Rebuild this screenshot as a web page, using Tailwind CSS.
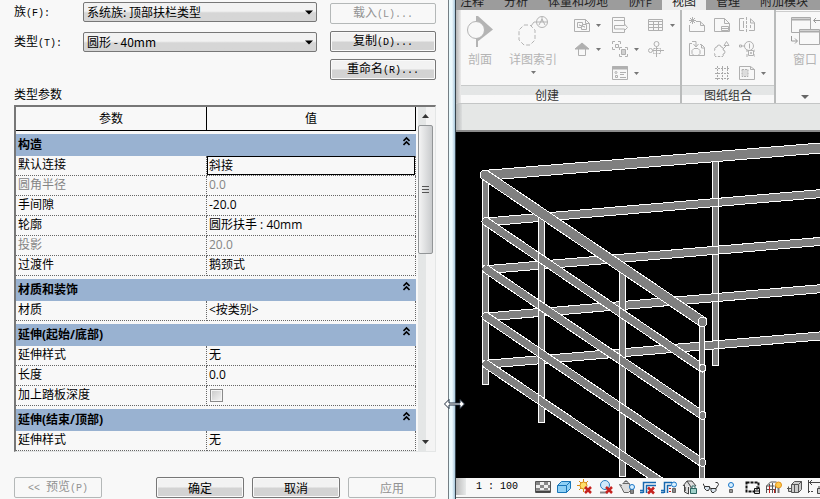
<!DOCTYPE html>
<html lang="zh-CN">
<head>
    <meta charset="UTF-8">
    <meta name="viewport" content="width=device-width, initial-scale=1.0">
    <title>类型属性</title>
    <script src="https://cdn.jsdelivr.net/npm/@tailwindcss/browser@4"></script>
</head>
<body class="bg-[#f8f8f8] text-black text-xs font-['Open_Sans','Noto_Sans_CJK_SC',sans-serif]">

    <div class="grid grid-cols-[minmax(0,448fr)_8px_minmax(0,364fr)] min-h-screen overflow-hidden">

        <!-- Type properties dialog -->
        <form class="pl-[14px] pr-3 flex flex-col font-['Noto_Sans_CJK_SC',sans-serif]">
            <div class="flex gap-[13px]">
                <div class="flex-1 grid grid-cols-[69px_minmax(0,1fr)] gap-y-[10px] content-start pt-[2px]">
                    <label for="family" class="h-5 leading-[18px]">族<span class="font-['Liberation_Mono',monospace] text-[10px]">(F):</span></label>
                    <div class="relative h-5">
                        <select id="family" class="appearance-none block w-full h-5 pl-[3px] leading-[18px] border border-[#777] rounded-[2px] bg-linear-to-b from-[#f2f2f2] from-45% to-[#d6d6d6] to-55%">
                            <option>系统族: 顶部扶栏类型</option>
                        </select>
                        <svg class="absolute right-[4px] top-[8px] pointer-events-none" width="8" height="5"><path d="M0 .5h8L4 4.500z"/></svg>
                    </div>
                    <label for="type" class="h-5 leading-[18px]">类型<span class="font-['Liberation_Mono',monospace] text-[10px]">(T):</span></label>
                    <div class="relative h-5">
                        <select id="type" class="appearance-none block w-full h-5 pl-[3px] leading-[18px] border border-[#777] rounded-[2px] bg-linear-to-b from-[#f2f2f2] from-45% to-[#d6d6d6] to-55%">
                            <option>圆形 - 40mm</option>
                        </select>
                        <svg class="absolute right-[4px] top-[8px] pointer-events-none" width="8" height="5"><path d="M0 .5h8L4 4.500z"/></svg>
                    </div>
                </div>
                <div class="w-[106px] flex flex-col gap-[7px] pt-[3px] pb-[2px]">
                    <button type="button" disabled class="h-[21px] leading-4 border border-[#b4b8b8] rounded-[2px] text-[#929292]">载入<span class="font-['Liberation_Mono',monospace] text-[10px]">(L)...</span></button>
                    <button type="button" class="h-[21px] leading-4 border border-[#777] rounded-[2px] shadow-[inset_0_0_0_1px_#fafafa] bg-linear-to-b from-[#f2f2f2] from-45% to-[#d3d3d3] to-55%">复制<span class="font-['Liberation_Mono',monospace] text-[10px]">(D)...</span></button>
                    <button type="button" class="h-[21px] leading-4 border border-[#777] rounded-[2px] shadow-[inset_0_0_0_1px_#fafafa] bg-linear-to-b from-[#f2f2f2] from-45% to-[#d3d3d3] to-55%">重命名<span class="font-['Liberation_Mono',monospace] text-[10px]">(R)...</span></button>
                </div>
            </div>

            <p class="leading-[23px]">类型参数</p>

            <div class="flex border-t-2 border-l-2 border-t-[#777] border-l-[#777] border-r border-b border-r-[#e4e6e6] border-b-[#e4e6e6] font-['Open_Sans','Noto_Sans_CJK_SC',sans-serif]">
                <table class="flex-1 table-fixed border-separate border-spacing-0 leading-[18px]">
                    <colgroup><col class="w-[191px]"><col></colgroup>
                    <thead>
                        <tr class="h-6">
                            <th class="p-0 font-normal border-r border-b border-black">参数</th>
                            <th class="p-0 font-normal border-r border-b border-black">值</th>
                        </tr>
                    </thead>
                    <tbody class="[&_td]:h-5 [&_td]:p-0 [&_td]:pl-[2px] [&_td]:pb-[2px] [&_td]:leading-[17px] [&_td]:border-r [&_td]:border-b [&_td]:border-dotted [&_td]:border-[#666]">
                        <tr class="h-[25px]">
                            <th colspan="2" class="p-0 pl-[2px] border-t-[3px] border-[#f8f8f8] bg-[#99b2d1] text-left">
                                <div class="flex justify-between pr-[6px]">构造<svg width="7" height="16" fill="none" stroke="#000" stroke-width="1.600"><path d="M.5 5l3-3 3 3M.5 9l3-3 3 3"/></svg></div>
                            </th>
                        </tr>
                        <tr><td>默认连接</td><td class="!p-0"><input type="text" value="斜接" aria-label="默认连接" class="block w-full h-[19px] pl-[1px] pb-[2px] border border-black leading-4"></td></tr>
                        <tr class="text-[#858585]"><td>圆角半径</td><td>0.0</td></tr>
                        <tr><td>手间隙</td><td>-20.0</td></tr>
                        <tr><td>轮廓</td><td>圆形扶手 : 40mm</td></tr>
                        <tr class="text-[#858585]"><td>投影</td><td>20.0</td></tr>
                        <tr><td>过渡件</td><td>鹅颈式</td></tr>
                        <tr class="h-[25px]">
                            <th colspan="2" class="p-0 pl-[2px] border-t-[3px] border-[#f8f8f8] bg-[#99b2d1] text-left">
                                <div class="flex justify-between pr-[6px]">材质和装饰<svg width="7" height="16" fill="none" stroke="#000" stroke-width="1.600"><path d="M.5 5l3-3 3 3M.5 9l3-3 3 3"/></svg></div>
                            </th>
                        </tr>
                        <tr><td>材质</td><td>&lt;按类别&gt;</td></tr>
                        <tr class="h-[25px]">
                            <th colspan="2" class="p-0 pl-[2px] border-t-[3px] border-[#f8f8f8] bg-[#99b2d1] text-left">
                                <div class="flex justify-between pr-[6px]">延伸(起始/底部)<svg width="7" height="16" fill="none" stroke="#000" stroke-width="1.600"><path d="M.5 5l3-3 3 3M.5 9l3-3 3 3"/></svg></div>
                            </th>
                        </tr>
                        <tr><td>延伸样式</td><td>无</td></tr>
                        <tr><td>长度</td><td>0.0</td></tr>
                        <tr><td><label for="depth">加上踏板深度</label></td><td class="!pb-0"><input type="checkbox" id="depth" class="appearance-none block size-[13px] ml-[1px] border border-[#8a8a8a] bg-linear-to-br from-[#c8c8c8] to-[#f6f6f6] shadow-[inset_0_0_0_1px_#f4f4f4]"></td></tr>
                        <tr class="h-[25px]">
                            <th colspan="2" class="p-0 pl-[2px] border-t-[3px] border-[#f8f8f8] bg-[#99b2d1] text-left">
                                <div class="flex justify-between pr-[6px]">延伸(结束/顶部)<svg width="7" height="16" fill="none" stroke="#000" stroke-width="1.600"><path d="M.5 5l3-3 3 3M.5 9l3-3 3 3"/></svg></div>
                            </th>
                        </tr>
                        <tr><td>延伸样式</td><td>无</td></tr>
                    </tbody>
                </table>
                <!-- Scroll bar -->
                <div class="w-[17px] ml-[2px] flex flex-col items-start bg-linear-to-r from-[#e4e6e6] from-50% to-[#f4f4f4] to-50%">
                    <div class="w-[15px] h-[18px] flex items-center justify-center"><svg width="7" height="4"><path d="M0 4l3.500-4L7 4z" fill="#333"/></svg></div>
                    <div class="w-[15px] h-[129px] border border-[#929597] rounded-[2px] bg-linear-to-r from-[#f4f4f4] to-[#c9cbcd] flex flex-col items-center justify-center gap-[2px]">
                        <i class="w-[7px] h-px bg-[#555]"></i>
                        <i class="w-[7px] h-px bg-[#555]"></i>
                        <i class="w-[7px] h-px bg-[#555]"></i>
                    </div>
                    <div class="w-[15px] h-[18px] mt-auto flex items-center justify-center"><svg width="7" height="4"><path d="M0 0h7L3.500 4z" fill="#333"/></svg></div>
                </div>
            </div>

            <div class="flex gap-2 mt-[25px]">
                <button type="button" disabled class="w-[88px] h-[21px] mr-auto leading-4 border border-[#b4b8b8] rounded-[2px] text-[#929292]"><span class="font-['Liberation_Mono',monospace] text-[10px]">&lt;&lt; </span>预览<span class="font-['Liberation_Mono',monospace] text-[10px]">(P)</span></button>
                <button type="submit" class="w-[88px] h-[21px] leading-4 border border-[#777] rounded-[2px] shadow-[inset_0_0_0_1px_#fafafa] bg-linear-to-b from-[#f2f2f2] from-45% to-[#d3d3d3] to-55%">确定</button>
                <button type="button" class="w-[88px] h-[21px] leading-4 border border-[#777] rounded-[2px] shadow-[inset_0_0_0_1px_#fafafa] bg-linear-to-b from-[#f2f2f2] from-45% to-[#d3d3d3] to-55%">取消</button>
                <button type="button" disabled class="w-[88px] h-[21px] leading-4 border border-[#b4b8b8] rounded-[2px] text-[#929292]">应用</button>
            </div>
        </form>

        <!-- Window edge with the resize cursor over it -->
        <div class="relative z-10 border-l border-r border-l-[#747e84] border-r-[#35434d] bg-linear-to-r from-[#e6fafe] via-[#eef9fd] to-[#a9c8dc]">
            <svg class="absolute -left-[6px] top-[398px]" width="24" height="12" fill="#fff" stroke="#1d2a3c"><path d="M1.500 6L6 1.500V5h11V1.500L21.500 6 17 10.500V7H6v3.500z"/></svg>
        </div>

        <!-- Main window -->
        <div class="flex flex-col min-w-0">
            <nav class="flex h-[10px] overflow-hidden bg-[#9c9c9c] pl-1 text-[#222] whitespace-nowrap items-end leading-4">
                <a href="#" class="pr-[10px]">注释</a>
                <a href="#" class="px-[10px]">分析</a>
                <a href="#" class="px-[10px]">体量和场地</a>
                <a href="#" class="px-[10px]">协作</a>
                <a href="#" class="px-[10px] bg-[#ececec]">视图</a>
                <a href="#" class="px-[10px]">管理</a>
                <a href="#" class="px-[10px]">附加模块</a>
            </nav>

            <div class="flex h-[94px] overflow-hidden border-b border-[#c4c6c6] bg-[#f8f8f8] text-[#b4b4b4] leading-4">
                <div class="w-[5px] shrink-0 bg-linear-to-r from-[#b8b8b8] to-[#ececec]"></div>

                <section class="w-[221px] shrink-0 flex flex-col border-r-2 border-[#b9bbbb]">
                    <div class="h-[76px] flex pl-[7px]">
                        <button class="w-6 mr-4 pt-[5px] flex flex-col items-center">
                            <svg class="shrink-0" width="26" height="33"><path d="M9 1h2l15 13.500-14 11-1 .5v6H9z" fill="#b4b4b4"/><circle cx="9" cy="15" r="8.500" fill="#f8f8f8" stroke="#b4b4b4"/></svg>
                            <span class="mt-[4px] whitespace-nowrap">剖面</span>
                        </button>
                        <button class="w-[50px] mr-[16px] pt-[5px] flex flex-col items-center">
                            <svg class="shrink-0" width="32" height="33" fill="none" stroke="#b4b4b4"><path d="M7 10h6l5 5v10l-5 5H7l-5-5V15z" stroke-dasharray="4 2"/><path d="M14 11l3-4h13"/><circle cx="25" cy="7" r="5.500"/><path d="M22 10l3-6 3 6M25 2v5"/></svg>
                            <span class="mt-[4px] whitespace-nowrap">详图索引</span>
                            <svg class="mt-[3px] shrink-0" width="5" height="3"><path d="M0 0h5L2.500 3z" fill="#777"/></svg>
                        </button>
                        <div class="grid grid-cols-[38px_36px_28px] grid-rows-[24px_24px_24px] pt-[3px] [&>button]:flex [&>button]:items-center [&>button]:gap-[6px]">
                            <button aria-label="平面视图"><svg width="16" height="16" fill="none" stroke="#b0b0b0"><path d="M.5 2.500h11l4 4v8H.5zM11.500 2.500v4h4M3.500 5.500h5v2h4v5h-5v-2h-4zM5.500 7.500v1h2v2M10.500 10.500v-1h-2v-2"/></svg><svg width="5" height="3"><path d="M0 0h5L2.500 3z" fill="#777"/></svg></button>
                            <button aria-label="绘图视图"><svg width="16" height="16" fill="none" stroke="#b0b0b0"><path d="M12.500 7V.5H.5v15h12V13M2 3.500h10M2.500 8.500h10V7l3 3.500-3 3V12h-10z"/></svg></button>
                            <button aria-label="明细表"><svg width="16" height="16" fill="none" stroke="#b0b0b0"><path d="M.5 2.500h14v11H.5zM0 4.500h15M.5 7.500h14M.5 10.500h14M5.500 5v8M10.500 5v8"/></svg><svg width="5" height="3"><path d="M0 0h5L2.500 3z" fill="#777"/></svg></button>
                            <button aria-label="立面"><svg width="16" height="16" fill="none" stroke="#b0b0b0"><path d="M4.500 8v6.500h7V8"/><path d="M8 2l7 6H1z" fill="#b0b0b0"/></svg><svg width="5" height="3"><path d="M0 0h5L2.500 3z" fill="#777"/></svg></button>
                            <button aria-label="复制视图"><svg width="16" height="16" fill="none" stroke="#b0b0b0"><path d="M.5 3V.5H3M6 .5h2.500V3M.5 6v2.500H3M3.500 3.500h3v3h-3zM7.500 9V6.500H10M13 6.500h2.500V9M7.500 13v2.500H10M15.500 13v2.500H13"/><path d="M9.500 8.500h4v5h-4z" fill="#d0d0d0"/></svg><svg width="5" height="3"><path d="M0 0h5L2.500 3z" fill="#777"/></svg></button>
                            <button aria-label="范围框"><svg width="16" height="16" fill="none" stroke="#b0b0b0"><circle cx="8.500" cy="3" r="2.500"/><circle cx="2.500" cy="9.500" r="2"/><path d="M8.500 5.500V16M4.500 9.500H16"/><path d="M5.500 7.500h7v5h-7z" stroke-dasharray="2 1"/></svg></button>
                            <button aria-label="图例" class="col-start-2"><svg width="16" height="16" fill="none" stroke="#b0b0b0"><path d="M.5 1.500h15v13H.5z"/><path d="M0 3h16" stroke-width="3"/><circle cx="4" cy="7.500" r="1"/><path d="M3.500 10.500h2v2h-2zM8 7.500h6M8 9.500h4M8 12.500h6"/></svg><svg width="5" height="3"><path d="M0 0h5L2.500 3z" fill="#777"/></svg></button>
                        </div>
                    </div>
                    <h2 class="flex-1 border-t border-[#c8caca] bg-linear-to-b from-[#e4e6e6] from-50% to-[#f8f8f8] to-50% text-[#333] text-center leading-[19px] pr-[47px]">创建</h2>
                </section>

                <section class="w-[94px] shrink-0 flex flex-col border-r-2 border-[#b9bbbb]">
                    <div class="h-[76px] grid grid-cols-[25px_25px_30px] grid-rows-[24px_24px_24px] pt-[3px] pl-[7px] [&>button]:flex [&>button]:items-center [&>button]:gap-[6px]">
                        <button aria-label="图纸"><svg width="16" height="16" fill="none" stroke="#b0b0b0"><path d="M7 4.500h4l4.500 4v6H.5V8M11.500 4.500v4h4M3.500 0v7M0 3.500h7M1 1l5 5M6 1L1 6"/></svg></button>
                        <button aria-label="标题栏"><svg width="16" height="16" fill="none" stroke="#b0b0b0"><path d="M.5 1.500h10l5 5v8H.5zM10.500 1.500v5h5"/><path d="M7.500 9.500h7v4h-7zM7.500 11.500h7"/></svg></button>
                        <button aria-label="拼接线"><svg width="16" height="16" fill="none" stroke="#b0b0b0"><path d="M5 1.500H.5v12H5M11 1.500l4.500 4v8H10M11.500 2v4h4M4.500 4v7M11.500 8v3"/><path d="M7.500 0v16" stroke-dasharray="3 1"/></svg></button>
                        <button aria-label="放置视图"><svg width="16" height="16" fill="none" stroke="#b0b0b0"><path d="M3 2.500H.5v12h15v-8l-3-3H11M12.500 4v3h3M3 .5h4V5M4.500 3L7 6l2.500-3"/><path d="M5 7.500h4l2 2v3l-2 2H5l-2-2v-3z"/></svg></button>
                        <button aria-label="修订"><svg width="16" height="16" fill="none" stroke="#b0b0b0"><path d="M12.500.5l2.500 4h-5zM3 6a2 2 0 0 1 4 0 2 2 0 0 1 2 3 2 2 0 0 1 0 4 2 2 0 0 1-4 2 2 2 0 0 1-4-2 2 2 0 0 1 0-4 2 2 0 0 1 2-3M9 8l3-3"/></svg></button>
                        <button aria-label="导向轴网"><svg width="16" height="16" fill="none" stroke="#b0b0b0"><circle cx="10" cy="5" r="4.500"/><path d="M.5 4h2v2h-2zM2.500 5h3M10.500 2.500v5M9.500 9.500h5v5h-5zM11.500 11.500h1v1h-1zM8 8.500V11M16 8.500V11M8 13v3M16 13v3"/></svg></button>
                        <button aria-label="轴网" class="col-start-2"><svg width="16" height="16" fill="none" stroke="#aaa" stroke-dasharray="2 1"><path d="M3.500 1v14M8.500 1v14M13.500 1v14M1 3.500h14M1 8.500h14M1 13.500h14"/></svg></button>
                        <button aria-label="视口"><svg class="shrink-0" width="16" height="16" fill="none" stroke="#b0b0b0"><path d="M.5 1.500h11l4 3v10H.5zM11.500 1.500v3h4"/><path d="M3 4.500h6v7H3z" fill="#ddd" stroke-dasharray="2 1"/></svg><svg class="shrink-0" width="5" height="3"><path d="M0 0h5L2.500 3z" fill="#777"/></svg></button>
                    </div>
                    <h2 class="flex-1 border-t border-[#c8caca] bg-linear-to-b from-[#e4e6e6] from-50% to-[#f8f8f8] to-50% text-[#333] text-center leading-[19px]">图纸组合</h2>
                </section>

                <section class="min-w-[60px] flex-1 mt-[1px] border-t border-[#ccc]">
                    <button class="w-full pl-[14px] pt-[5px] flex flex-col items-start">
                        <svg width="32" height="30" fill="#f8f8f8" stroke="#aaa"><path d="M1.500.5h19v15h-19z"/><path d="M1 2.500h20" stroke-width="2"/><path d="M9.500 12.500h20v15h-20z"/><path d="M9 14.500h21" stroke-width="2"/><path d="M1.500 19v5H7M5 21.500L7.500 24 5 26.500M32 3.500h-8M26 1l-2.500 2.500L26 6" fill="none" stroke="#999"/></svg>
                        <span class="ml-[3px] mt-[5px]">窗口</span>
                        <svg class="ml-[11px] mt-[27px]" width="8" height="4"><path d="M0 0h8L4 4z" fill="#666"/></svg>
                    </button>
                </section>
            </div>

            <div class="h-[28px] flex bg-[#e5e7e6] border-b-2 border-[#8b8b8b]">
                <div class="w-[6px] bg-linear-to-r from-[#b4b6b6] to-[#dcdede]"></div>
            </div>

            <!-- Railing model view -->
            <div class="flex-1 min-h-[346px] bg-black relative">
                <svg class="absolute inset-0 size-full" viewBox="456 132 364 346" preserveAspectRatio="xMinYMin slice" shape-rendering="crispEdges" fill="none">
                    <g stroke="#fff" stroke-width="7"><path d="M715.500 160V366"/></g>
                    <g stroke="#808080" stroke-width="5"><path d="M715.500 160V365"/></g>
                    <g stroke="#fff" stroke-width="9"><path d="M486 222L822 193.500M486 269.700L822 241.300M486 317L822 288.600M486 364.300L822 335.800"/><path d="M486 175.300L822 147.900" stroke-width="11"/></g>
                    <g stroke="#808080" stroke-width="7"><path d="M486 222L822 193.500M486 269.700L822 241.300M486 317L822 288.600M486 364.300L822 335.800"/><path d="M486 175.300L822 147.900" stroke-width="9"/></g>
                    <path d="M718.500 162V365" stroke="#fff"/>
                    <g stroke="#fff" stroke-width="7"><path d="M485.500 178V385M541.500 217V423M622.500 272V477"/></g>
                    <g stroke="#808080" stroke-width="5"><path d="M485.500 178V384M541.500 217V422M622.500 272V476"/></g>
                    <g stroke="#fff" stroke-width="9" stroke-linecap="round"><path d="M486 221.500L702 368M486 269L702 415M486 316.500L702 462.500M486 364L702 509.500"/></g>
                    <g stroke="#808080" stroke-width="7" stroke-linecap="round"><path d="M486 221.500L702 368M486 269L702 415M486 316.500L702 462.500M486 364L702 509.500"/></g>
                    <path d="M538.500 217V422M619.500 272V476" stroke="#fff"/>
                    <path d="M702 322V480" stroke="#fff" stroke-width="6"/>
                    <path d="M702 322V480" stroke="#808080" stroke-width="4"/>
                    <path d="M485 175L702 321.500" stroke="#fff" stroke-width="11" stroke-linecap="round"/>
                    <path d="M485 175L702 321.500" stroke="#808080" stroke-width="9" stroke-linecap="round"/>
                    <g stroke="#fff" fill="#808080"><circle cx="702.500" cy="322" r="4.500"/><ellipse cx="702.500" cy="368" rx="3" ry="4"/><ellipse cx="702.500" cy="415.500" rx="3" ry="4"/><ellipse cx="702.500" cy="462.500" rx="3" ry="4"/></g>
                </svg>
            </div>

            <!-- View control bar -->
            <div class="h-[21px] flex items-start bg-[#f8f8f8] overflow-hidden">
                <div class="w-full h-[20px] flex items-center border-b border-[#8b8b8b] overflow-hidden pb-[2px]">
                    <div class="w-[10px] h-full shrink-0 bg-linear-to-r from-[#bbb] to-[#e8eaea]"></div>
                    <span class="w-[69px] shrink-0 pl-[10px] font-['Liberation_Mono',monospace] text-[10px] whitespace-nowrap">1 : 100</span>
                    <div class="flex gap-[5px] [&>svg]:shrink-0">
                        <svg width="16" height="16"><path d="M.5 2.500h15v11H.5z" fill="#eee" stroke="#555"/><path d="M1 3h4v3H1zM9 3h4v3H9zM5 6h4v3H5zM13 6h2v3h-2zM1 9h4v2H1zM9 9h4v2H9z" fill="#888"/><path d="M1 12.500h14" stroke="#444" stroke-width="2"/></svg>
                        <svg width="16" height="16" fill="#8fd0f5" stroke="#1976b8"><path d="M1.500 6.500l4-4h9v7l-4 4h-9zM1.500 6.500h9v7M10.500 6.500l4-4"/></svg>
                        <svg width="16" height="16" fill="#ffe06a" stroke="#d98b12"><path d="M6.500 0v3M6.500 10v3M0 6.500h3M2 2l2 2M2 11l2-2M11 2L9 4"/><circle cx="6.500" cy="6.500" r="3.500"/><path d="M8 8l6 6M14 8l-6 6" stroke="#c5221f" stroke-width="2.500"/></svg>
                        <svg width="16" height="16" fill="#cfe9fb" stroke="#2b7fc0"><path d="M2 13.500h8" stroke="#888" stroke-width="2"/><circle cx="7" cy="6" r="4.500"/><path d="M8 8l6 6M14 8l-6 6" stroke="#c5221f" stroke-width="2.500"/></svg>
                        <svg width="16" height="16" fill="#ddd" stroke="#666"><path d="M3.500 4.500h7l1 7-2 2H5l-2-4-2.500-4 2.500 1M4.500 4.500l1-2h3l1 2M7 1v1"/><path d="M11.500 10.500h3v4h-3z" fill="#888" stroke="#666"/><circle cx="13" cy="8" r="2.500" fill="#d8f0ff" stroke="#1976c8"/></svg>
                        <svg width="16" height="16" fill="none" stroke="#1668b0"><path d="M3.500 14V3.500H16M6.500 14V6.500H16M0 11.500h3M0 13.500h3" stroke-width="1.500"/><path d="M8 8.500l6 6M14 8.500l-6 6" stroke="#c5221f" stroke-width="2.500"/></svg>
                        <svg width="16" height="16" fill="none" stroke="#1668b0"><path d="M3.500 14V3.500H11M6.500 14V6.500H10M0 11.500h3M0 13.500h3" stroke-width="1.500"/><path d="M8 9.500h2M8 12.500h2" stroke="#c5221f"/><path d="M11.500 9.500h3v4h-3z" fill="#888" stroke="#666"/><circle cx="13" cy="5.500" r="2.500" fill="#d8f0ff" stroke="#1976c8"/></svg>
                        <svg width="16" height="16" fill="#ddd" stroke="#444"><path d="M1 7l4-5h5l4 5M2.500 6v7l4 2V8M5 2l4 6v6" /><path d="M3.500 8v4" stroke="#777"/><path d="M8.500 9.500h6v5h-6z" fill="#9dd0c8" stroke="#2b6560"/><path d="M10 9V7h3v2" fill="none" stroke="#2b6560"/></svg>
                        <svg width="16" height="16" fill="#d6e2ec" stroke="#333"><path d="M1.500 7.500h5v2l-1 2h-2l-2-2zM8 9.500h5v2l-2 2H9l-1-2z"/><path d="M1.500 7.500L0 4.500M6.500 8.500L8 9.500M13 9.500l2.500-4-1-2h-2" fill="none"/></svg>
                        <svg width="16" height="16" fill="#d8f0ff" stroke="#1976c8"><path d="M5.500 10.500h3v3h-3z" fill="#999" stroke="#666"/><circle cx="7" cy="6" r="2.500"/></svg>
                        <svg width="16" height="16" fill="none" stroke="#111"><path d="M1.500 3.500h12v9h-12z" stroke-dasharray="3 1" stroke-width="2"/><path d="M9.500 9.500h5v5h-5z" fill="#ddd"/><path d="M12 7v4M10 12h4"/></svg>
                        <svg width="16" height="16" fill="none" stroke="#555"><path d="M.5 7l4-4h6M.5 14V7h8M3.500 14V5M6.500 14V4M9.500 14V7M0 10.500h10"/><path d="M3.500 7v7M8.500 10v4" stroke="#c5221f"/><circle cx="12.500" cy="6" r="3" fill="#ffc94a" stroke="#e0901c"/><path d="M12.500 9v5" stroke="#777" stroke-width="2"/></svg>
                        <svg width="16" height="16" fill="#ccc" stroke="#555"><path d="M4.500 5.500l3-3h7v8l-3 3h-7zM4.500 5.500h7v8M11.500 5.500l3-3M7.500 5.500v8M1.500 7.500v5h3M0 9.500h4"/></svg>
                        <svg width="16" height="16" fill="none" stroke="#444"><path d="M.5 1v13M13.500 1v5M1 3.500h12M4 1L1.500 3.500 4 6"/><path d="M9.500 9.500h6v5h-6z" fill="#ccc"/><path d="M11 9V7h3v2M0 12.500h6" stroke-dasharray="2 1"/></svg>
                    </div>
                </div>
            </div>
        </div>
    </div>
</body>
</html>
